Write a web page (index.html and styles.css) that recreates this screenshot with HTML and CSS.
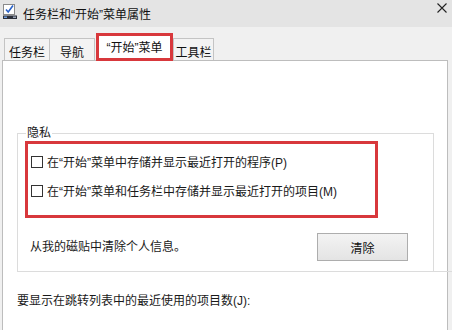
FILE: index.html
```html
<!DOCTYPE html>
<html lang="zh-CN">
<head>
<meta charset="utf-8">
<title>任务栏和“开始”菜单属性</title>
<link rel="stylesheet" href="styles.css">
</head>
<body>
<div class="window">
  <div class="titlebar">
    <svg class="app-icon" width="16" height="17" viewBox="0 0 16 17">
      <rect x="1.5" y="1.5" width="11" height="10" fill="#fff" stroke="#8a8a8a"/>
      <path d="M4 6.5 L6.2 9 L11 2.5" fill="none" stroke="#2a62c9" stroke-width="1.6"/>
      <rect x="1" y="12.5" width="14" height="3.5" fill="#2b2f3a"/>
      <rect x="2" y="13.5" width="3" height="1.5" fill="#6b9be0"/>
      <rect x="11" y="13.5" width="3" height="1.5" fill="#9aa4b5"/>
    </svg>
    <span class="title">任务栏和“开始”菜单属性</span>
    <svg class="close" width="10" height="10" viewBox="0 0 10 10">
      <path d="M0.5 0.5 L9.5 9.5 M9.5 0.5 L0.5 9.5" stroke="#222" stroke-width="1.1"/>
    </svg>
  </div>
  <div class="tabs">
    <div class="tab t1">任务栏</div>
    <div class="tab t2">导航</div>
    <div class="tab active">“开始”菜单</div>
    <div class="tab t4">工具栏</div>
  </div>
  <div class="panel">
    <div class="group">
      <span class="legend">隐私</span>
      <div class="highlight">
        <div class="check"><span class="box"></span><span>在“开始”菜单中存储并显示最近打开的程序(P)</span></div>
        <div class="check"><span class="box"></span><span>在“开始”菜单和任务栏中存储并显示最近打开的项目(M)</span></div>
      </div>
      <div class="clear-row">
        <span class="clear-text">从我的磁贴中清除个人信息。</span>
        <button class="btn">清除</button>
      </div>
    </div>
    <div class="jump">要显示在跳转列表中的最近使用的项目数(J):</div>
  </div>
</div>
</body>
</html>
```

FILE: styles.css
```css
html, body {
  margin: 0;
  padding: 0;
}
body {
  width: 452px;
  height: 330px;
  overflow: hidden;
  background: #f0f0f0;
  font-family: "Liberation Sans", "Noto Sans CJK SC", sans-serif;
  font-size: 12px;
  color: #1a1a1a;
}
.window {
  display: flex;
  flex-direction: column;
  height: 330px;
}
.titlebar {
  height: 27px;
  background: #e4e4e4;
  display: flex;
  align-items: center;
  flex-shrink: 0;
}
.app-icon {
  margin-left: 2px;
  margin-top: -4px;
}
.title {
  margin-left: 5px;
  font-size: 12px;
  color: #111;
}
.close {
  margin-left: auto;
  margin-right: 5px;
  align-self: flex-start;
  margin-top: 3px;
}
.tabs {
  height: 33px;
  display: flex;
  align-items: flex-end;
  padding-left: 4px;
  flex-shrink: 0;
}
.tab {
  box-sizing: border-box;
  height: 22px;
  border: 1px solid #c4c4c4;
  border-bottom: none;
  background: #f3f3f3;
  display: flex;
  align-items: center;
  justify-content: center;
  padding-top: 4px;
  color: #111;
}
.t1 { width: 46px; }
.t2 { width: 46px; margin-left: -1px; }
.t4 { width: 41px; }
.tab.active {
  width: 77px;
  height: 28px;
  margin-left: 1px;
  margin-bottom: -1px;
  border: 3px solid #d8383c;
  background: #fff;
  position: relative;
  z-index: 1;
  padding-top: 0;
  padding-bottom: 1px;
}
.panel {
  flex: 1;
  margin: 0 4px 0 2px;
  background: #fff;
  border: 1px solid #bdbdbd;
  border-bottom: none;
  display: flex;
  flex-direction: column;
}
.group {
  position: relative;
  margin: 72px 13px 0 14px;
  border: 1px solid #dcdcdc;
  padding: 0 0 10px 0;
}
.group::after {
  content: "";
  position: absolute;
  left: 100%;
  bottom: -1px;
  width: 22px;
  border-top: 1px solid #dcdcdc;
}
.legend {
  position: absolute;
  top: -9px;
  left: 8px;
  padding: 0 1px;
  background: #fff;
  line-height: 16px;
}
.highlight {
  box-sizing: border-box;
  margin: 7px 0 0 7px;
  width: 353px;
  height: 77px;
  border: 3px solid #d8383c;
  padding: 3px 0 0 3px;
  display: flex;
  flex-direction: column;
}
.check {
  height: 29px;
  display: flex;
  align-items: center;
  gap: 4px;
}
.box {
  width: 10px;
  height: 10px;
  border: 1px solid #333;
  background: #fff;
  flex-shrink: 0;
}
.clear-row {
  margin: 15px 25px 0 12px;
  display: flex;
  align-items: center;
  justify-content: space-between;
  height: 28px;
}
.clear-text {
  margin-bottom: 4px;
}
.btn {
  box-sizing: border-box;
  width: 91px;
  height: 28px;
  border: 1px solid #adadad;
  background: linear-gradient(#f3f3f3, #e4e4e4);
  font-family: "Liberation Sans", "Noto Sans CJK SC", sans-serif;
  font-size: 12px;
  color: #111;
  padding: 0;
}
.jump {
  margin: 21px 0 0 14px;
  line-height: 16px;
}
```
